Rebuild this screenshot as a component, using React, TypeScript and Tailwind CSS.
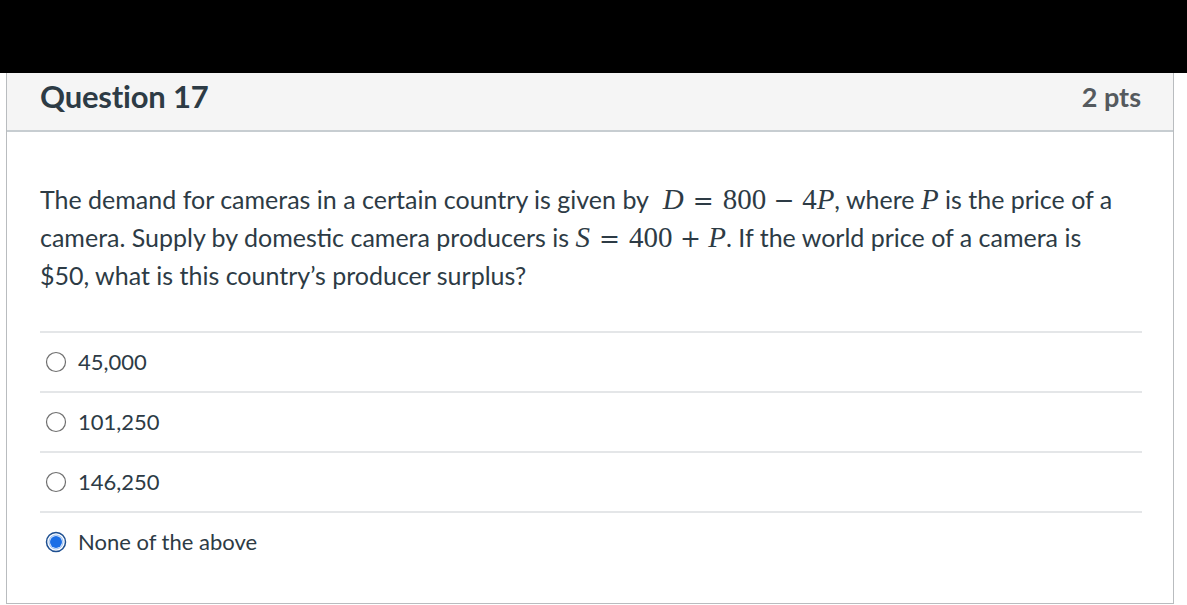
import React from "react";

const options = [
  { label: "45,000", checked: false },
  { label: "101,250", checked: false },
  { label: "146,250", checked: false },
  { label: "None of the above", checked: true },
];

function M({ children, first }: { children: React.ReactNode; first?: boolean }) {
  return (
    <span className={`font-['Liberation_Serif',serif] text-[29px] leading-none whitespace-nowrap ${first ? "ml-[8px]" : ""}`}>
      {children}
    </span>
  );
}

function V({ children }: { children: React.ReactNode }) {
  return <i className="font-['Liberation_Serif',serif]">{children}</i>;
}

// relation operator (thick space) and binary operator (medium space)
function Rel({ children }: { children: React.ReactNode }) {
  return <span className="font-['DejaVu_Serif',serif] text-[25px] mx-[0.36em]">{children}</span>;
}
function Bin({ children }: { children: React.ReactNode }) {
  return <span className="font-['DejaVu_Serif',serif] text-[25px] mx-[0.3em]">{children}</span>;
}

function Radio({ checked }: { checked: boolean }) {
  if (checked) {
    return (
      <svg width="22" height="22" viewBox="0 0 22 22" className="shrink-0">
        <circle cx="11" cy="11" r="9.5" fill="#fff" stroke="#1d4f91" strokeWidth="1.5" />
        <circle cx="11" cy="11" r="7" fill="#fff" stroke="#8fb8f0" strokeWidth="1" />
        <circle cx="11" cy="11" r="6" fill="#1a6ee6" />
      </svg>
    );
  }
  return (
    <svg width="22" height="22" viewBox="0 0 22 22" className="shrink-0">
      <circle cx="11" cy="11" r="9.5" fill="#fff" stroke="#6f6f6f" strokeWidth="1.2" />
    </svg>
  );
}

export default function App() {
  return (
    <div className="w-[1187px] h-[605px] bg-white font-['Lato','Noto_Sans',sans-serif] text-[#2d3b45] overflow-hidden">
      <div className="h-[73px] bg-black" />
      <div className="ml-[6px] w-[1168px] h-[531px] border-x border-b border-[#b9bcbf] flex flex-col">
        {/* Header */}
        <div className="h-[59px] bg-[#f5f5f5] border-b-2 border-[#c7cdd1] flex items-center justify-between pl-[33px] pr-[32px]">
          <h2 className="text-[31px] font-bold tracking-[-0.2px] mt-[-11px]">Question 17</h2>
          <span className="text-[27px] font-bold text-[#555a5e] mt-[-8px]">2 pts</span>
        </div>

        {/* Body */}
        <div className="px-[33px] pt-[48px]">
          <p className="text-[25px] leading-[38px] w-[1086px]">
            The demand for cameras in a certain country is given by{" "}
            <M first>
              <V>D</V>
              <Rel>=</Rel>800<Bin>−</Bin>4<V>P</V>
            </M>
            , where <M><V>P</V></M> is the price of a camera. Supply by domestic camera producers is{" "}
            <M>
              <V>S</V>
              <Rel>=</Rel>400<Bin>+</Bin>
              <V>P</V>
            </M>
            . If the world price of a camera is $50, what is this country’s producer surplus?
          </p>

          <div className="mt-[37px] w-[1102px]">
            {options.map((o) => (
              <div key={o.label} className="h-[60px] border-t-2 border-[#e4e6e8] flex items-center gap-[11px] pl-[5px]">
                <Radio checked={o.checked} />
                <span className="text-[22px] mt-[-2px]">{o.label}</span>
              </div>
            ))}
          </div>
        </div>
      </div>
    </div>
  );
}
